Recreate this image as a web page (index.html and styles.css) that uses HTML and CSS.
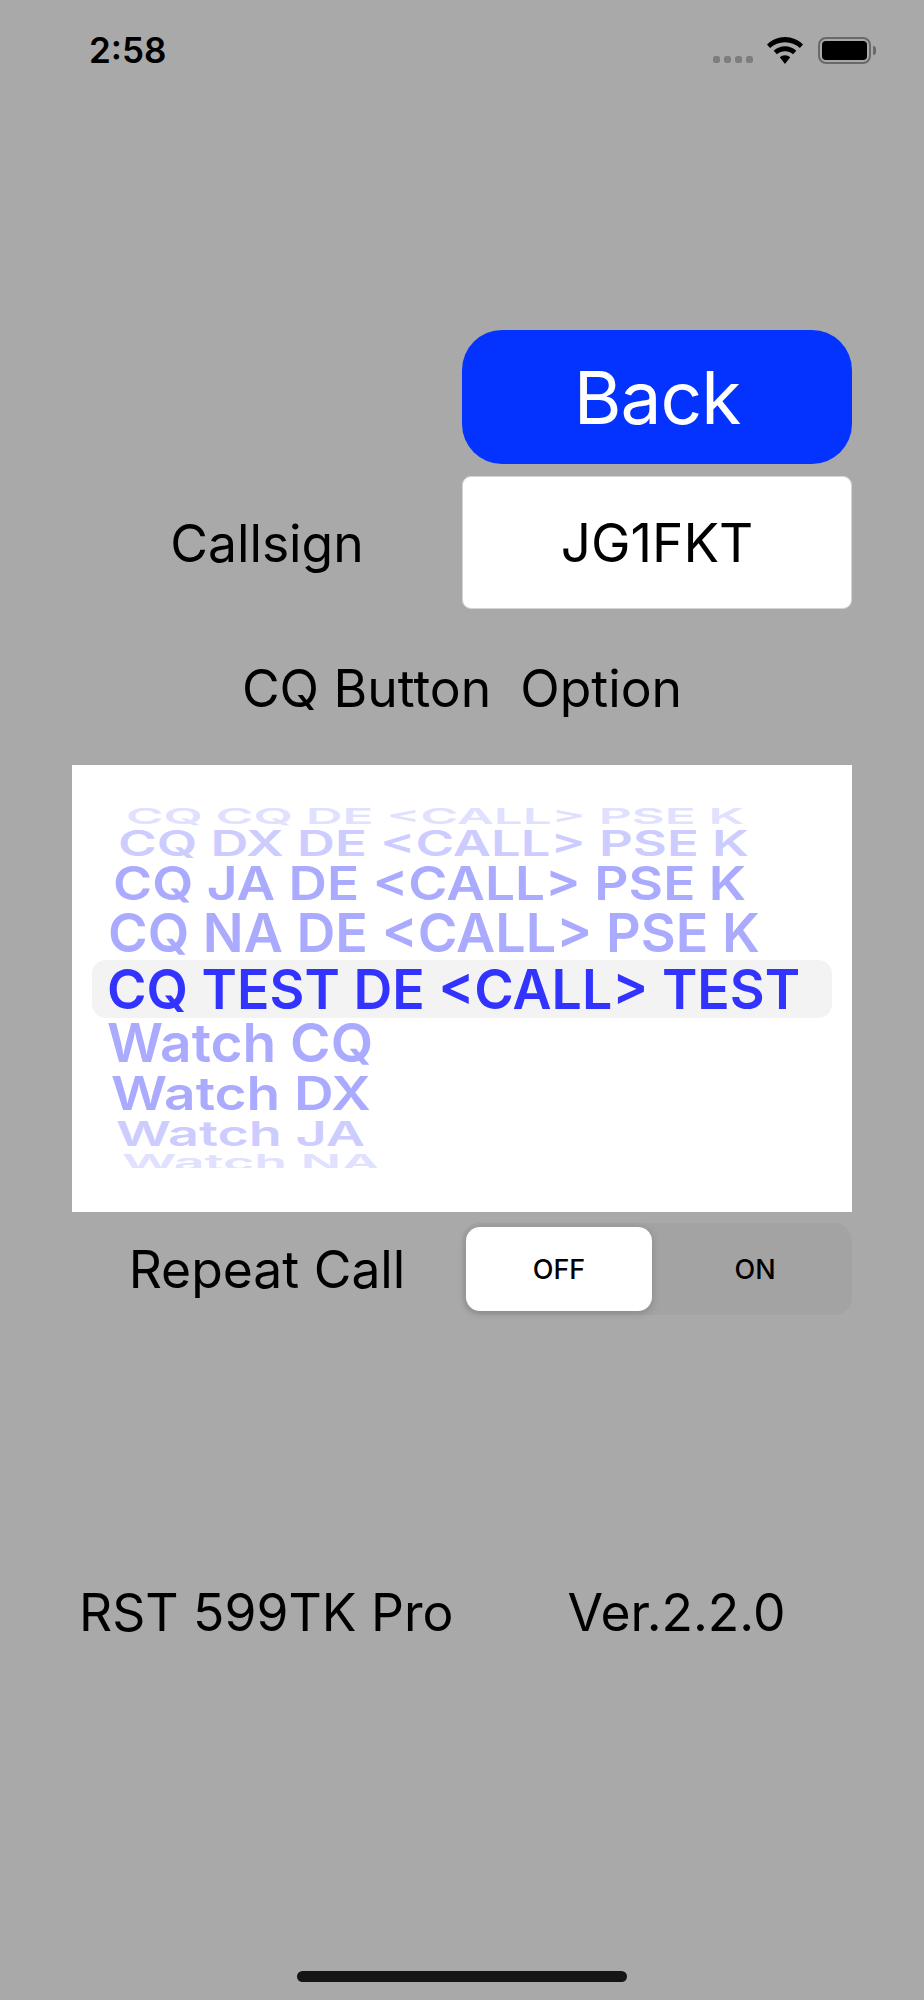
FILE: index.html
```html
<!DOCTYPE html>
<html lang="en">
<head>
<meta charset="utf-8">
<title>RST 599TK Pro</title>
<link rel="stylesheet" href="styles.css">
</head>
<body>
<div class="screen">
  <header class="status">
    <span class="time">2:58</span>
    <div class="status-icons">
      <div class="signal"><i></i><i></i><i></i><i></i></div>
      <svg class="wifi" viewBox="0 0 36 27" width="36" height="27"><path d="M18 0C11 0 5 2.800 0 7.400L3.100 11C7.200 7.300 12.300 5.200 18 5.200S28.800 7.300 32.900 11L36 7.400C31 2.800 25 0 18 0Z"/><path d="M18 9.200C13.800 9.200 9.800 10.900 6.700 13.700L9.900 17.300C12.100 15.300 15 14.200 18 14.200S23.900 15.300 26.100 17.300L29.300 13.700C26.200 10.900 22.200 9.200 18 9.200Z"/><path d="M18 18.200C16 18.200 14.200 18.900 12.800 20.200L18 27L23.200 20.200C21.800 18.900 20 18.200 18 18.200Z"/></svg>
      <div class="battery"><div class="battery-body"><div class="battery-fill"></div></div><div class="battery-nub"></div></div>
    </div>
  </header>
  <main class="content">
    <div class="row row-back">
      <div></div>
      <button class="back">Back</button>
    </div>
    <div class="row row-call">
      <div class="label">Callsign</div>
      <div class="field">JG1FKT</div>
    </div>
    <div class="heading">CQ Button&nbsp; Option</div>
    <div class="picker">
      <div class="highlight"></div>
      <div class="wheel">
        <div class="item item-a">CQ CQ DE &lt;CALL&gt; PSE K</div>
        <div class="item item-b">CQ DX DE &lt;CALL&gt; PSE K</div>
        <div class="item item-c">CQ JA DE &lt;CALL&gt; PSE K</div>
        <div class="item item-d">CQ NA DE &lt;CALL&gt; PSE K</div>
        <div class="item item-e">CQ TEST DE &lt;CALL&gt; TEST</div>
        <div class="item item-f">Watch CQ</div>
        <div class="item item-g">Watch DX</div>
        <div class="item item-h">Watch JA</div>
        <div class="item item-i"><span class="clip">Watch NA</span></div>
      </div>
    </div>
    <div class="row row-repeat">
      <div class="label">Repeat Call</div>
      <div class="segment">
        <div class="seg seg-on">OFF</div>
        <div class="seg seg-off">ON</div>
      </div>
    </div>
    <footer class="about">
      <span>RST 599TK Pro</span>
      <span>Ver.2.2.0</span>
    </footer>
  </main>
  <div class="home"></div>
</div>
</body>
</html>
```
FILE: styles.css
```css
* { box-sizing: border-box; }
html, body { margin: 0; padding: 0; }
body { background: #a9a9a9; font-family: Inter, "Liberation Sans", sans-serif; color: #000; }
.screen { width: 924px; height: 2000px; background: #a9a9a9; display: flex; flex-direction: column; overflow: hidden; }

.status { height: 100px; display: flex; justify-content: space-between; padding: 37px 48px 0 89px; flex: none; }
.time { font-size: 35px; font-weight: 600; line-height: 27px; }
.status-icons { display: flex; align-items: flex-start; }
.signal { display: flex; gap: 4px; margin: 19px 14px 0 0; }
.signal i { width: 7px; height: 7px; border-radius: 2.500px; background: #7d7d7d; display: block; }
.wifi { display: block; fill: #000; margin-right: 15px; }
.battery { display: flex; align-items: center; height: 27px; }
.battery-body { width: 53px; height: 27px; border: 2px solid #696969; border-radius: 8px; padding: 2px; }
.battery-fill { width: 100%; height: 100%; background: #000; border-radius: 4px; }
.battery-nub { width: 3px; height: 9px; background: #696969; border-radius: 0 3px 3px 0; margin-left: 2px; }

.content { flex: 1; padding: 230px 72px 0; display: flex; flex-direction: column; }
.row { display: grid; grid-template-columns: 390px 390px; }
.label { font-size: 51.600px; text-align: center; align-self: center; line-height: 58px; }
.back { height: 134px; border: 0; border-radius: 40px; background: #0433ff; color: #fff; font: 400 73px/1 Inter, "Liberation Sans", sans-serif; letter-spacing: -1px; padding: 0; }
.row-call { margin-top: 12px; }
.field { height: 133px; background: #fff; border-radius: 9px; border: 1px solid #d4d4d4; font-size: 53px; display: flex; align-items: center; justify-content: center; }
.heading { font-size: 51.600px; text-align: center; line-height: 58px; margin-top: 50px; }

.picker { height: 447px; margin-top: 48px; background: #fff; padding: 43px 0 0 37px; position: relative; overflow: hidden; }
.highlight { position: absolute; left: 20px; right: 20px; top: 195px; height: 58px; border-radius: 14px; background: #f3f3f4; }
.wheel { position: relative; display: flex; flex-direction: column; }
.item { font: 600 55px/40px Inter, "Liberation Sans", sans-serif; height: 40px; white-space: nowrap; transform-origin: 0 50%; color: #aaf; }
.item-a { color: #e0e0ff; transform: scale(.927, .4); height: 16px; line-height: 16px; margin-left: 17px; }
.item-b { color: #ccf; transform: scale(.955, .64); height: 25px; line-height: 25px; margin-left: 9px; margin-top: 7px; }
.item-c { transform: scale(.967, .84); height: 33px; line-height: 33px; margin-left: 4px; margin-top: 11px; }
.item-d { transform: scale(.979, .97); height: 39px; line-height: 39px; margin-left: -1px; margin-top: 14px; }
.item-e { color: #33f; margin-top: 16px; transform: scaleX(.976); margin-left: -2px; }
.item-f { transform: scale(1, .97); height: 39px; line-height: 39px; margin-top: 15px; margin-left: -2px; }
.item-g { transform: scale(1, .84); height: 33px; line-height: 33px; margin-top: 14px; margin-left: 2px; }
.item-h { color: #ccf; transform: scale(.98, .62); height: 24px; line-height: 24px; margin-top: 12px; margin-left: 7px; }
.item-i { color: #e0e0ff; height: 14px; line-height: 14px; margin-top: 8px; margin-left: 13px; overflow: hidden; }
.clip { display: block; height: 16px; line-height: 16px; transform: scale(.975, .4); transform-origin: 0 50%; }

.row-repeat { margin-top: 11px; }
.segment { height: 92px; background: #a3a3a3; border-radius: 18px; padding: 4px; display: grid; grid-template-columns: 186px 1fr; }
.seg { font-size: 27px; font-weight: 500; display: flex; align-items: center; justify-content: center; }
.seg-on { background: #fff; border-radius: 14px; box-shadow: 0 2px 8px rgba(0,0,0,.18); }
.seg-off { padding-left: 10px; }

.about { font-size: 51.600px; line-height: 58px; display: flex; gap: 114px; margin-top: 268px; padding-left: 7px; }

.home { width: 330px; height: 11px; background: #151515; border-radius: 6px; margin: 0 auto 18px; flex: none; }
```
